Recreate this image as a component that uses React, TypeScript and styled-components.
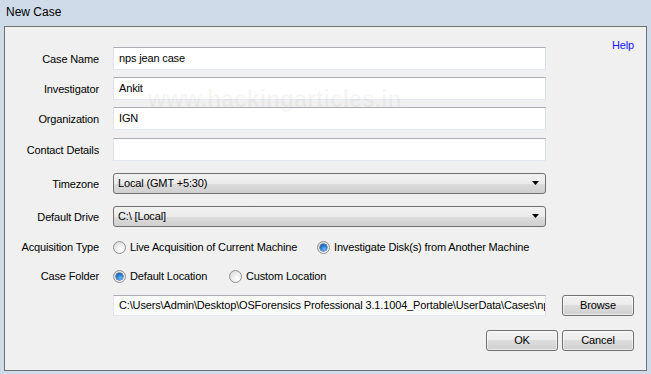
import React from "react";
import styled, { createGlobalStyle } from "styled-components";

const Global = createGlobalStyle`
  html, body { margin: 0; padding: 0; background: #cfdbe9; }
  * { box-sizing: border-box; }
`;

const UI_FONT = `"Liberation Sans", Arial, sans-serif`;

const Window = styled.div`
  width: 651px;
  height: 374px;
  display: flex;
  flex-direction: column;
  background: #cfdbe9;
  font-family: ${UI_FONT};
  font-size: 11px;
  letter-spacing: -0.15px;
  color: #000;
  overflow: hidden;
`;

const TitleBar = styled.div`
  height: 26px;
  display: flex;
  align-items: center;
  padding: 0 0 3px 6px;
  font-size: 12px;
  letter-spacing: 0;
  color: #000;
`;

const Panel = styled.div`
  position: relative;
  flex: 1;
  margin: 0 4px 3px 4px;
  border: 1px solid #6f7173;
  background: #f0f0f0;
  padding: 20px 12px 0 0;
  display: flex;
  flex-direction: column;
`;

const Row = styled.div<{ $mt?: number; $h: number }>`
  display: flex;
  align-items: center;
  height: ${(p) => p.$h}px;
  margin-top: ${(p) => p.$mt ?? 0}px;
`;

const Label = styled.div`
  width: 94px;
  flex: none;
  text-align: right;
  white-space: nowrap;
`;

const Control = styled.div`
  width: 433px;
  height: 100%;
  margin-left: 14px;
  flex: none;
  display: flex;
  align-items: center;
`;

const Aside = styled.div<{ $top?: boolean }>`
  width: 72px;
  margin-left: 16px;
  flex: none;
  display: flex;
  justify-content: flex-end;
  align-self: ${(p) => (p.$top ? "flex-start" : "center")};
  margin-top: ${(p) => (p.$top ? "-8px" : "0")};
`;

const TextBox = styled.input<{ $readonly?: boolean }>`
  width: 100%;
  height: 100%;
  margin: 0;
  border: 1px solid #e3e9ef;
  border-top-color: #abadb3;
  border-left-color: #e2e3ea;
  border-right-color: #dbdfe6;
  background: ${(p) => (p.$readonly ? "#fbfbfb" : "#ffffff")};
  padding: 0 0 1px 5px;
  font-family: ${UI_FONT};
  font-size: 11px;
  letter-spacing: -0.15px;
  color: #000;
  outline: none;
`;

const Combo = styled.div`
  width: 100%;
  height: 100%;
  border: 1px solid #707070;
  border-radius: 3px;
  background: linear-gradient(#f2f2f2 0%, #ebebeb 50%, #dddddd 50%, #cfcfcf 100%);
  display: flex;
  align-items: center;
  padding: 0 6px 1px 4px;
`;

const ComboText = styled.span`
  flex: 1;
  white-space: nowrap;
`;

const RadioGroup = styled.div`
  display: flex;
  align-items: center;
`;

const RadioItem = styled.label<{ $w?: number }>`
  display: flex;
  align-items: center;
  gap: 4px;
  width: ${(p) => (p.$w ? `${p.$w}px` : "auto")};
  white-space: nowrap;
`;

const RadioCircle = styled.span<{ $checked?: boolean }>`
  position: relative;
  width: 13px;
  height: 13px;
  flex: none;
  border-radius: 50%;
  border: 1px solid #8e8f8f;
  background: radial-gradient(circle at 65% 70%, #ffffff 0%, #f0f0f0 40%, #d4d4d4 100%);
  &::after {
    content: "";
    display: ${(p) => (p.$checked ? "block" : "none")};
    position: absolute;
    left: 2px;
    top: 2px;
    width: 7px;
    height: 7px;
    border-radius: 50%;
    background: radial-gradient(circle at 60% 70%, #6fbaf5 0%, #2a7fd0 45%, #0d3f7e 100%);
    box-shadow: 0 0 0 0.5px #1c4f8a;
  }
`;

const Button = styled.button<{ $w?: number }>`
  width: ${(p) => p.$w ?? 72}px;
  height: 21px;
  margin: 0;
  padding: 0 0 1px 0;
  border: 1px solid #707070;
  border-radius: 3px;
  background: linear-gradient(#f2f2f2 0%, #ebebeb 50%, #dddddd 50%, #cfcfcf 100%);
  box-shadow: inset 0 0 0 1px rgba(255, 255, 255, 0.6);
  font-family: ${UI_FONT};
  font-size: 11px;
  letter-spacing: -0.15px;
  color: #000;
`;

const ButtonBar = styled.div`
  display: flex;
  justify-content: flex-end;
  gap: 4px;
  margin-top: 14px;
`;

const HelpLink = styled.a`
  color: #1515f5;
  text-decoration: none;
  line-height: 13px;
  cursor: pointer;
`;

const Watermark = styled.div`
  position: absolute;
  left: 143px;
  top: 59px;
  font-family: "Liberation Sans", Arial, sans-serif;
  font-weight: bold;
  font-size: 23px;
  letter-spacing: 0;
  color: rgba(110, 110, 110, 0.06);
  pointer-events: none;
  white-space: nowrap;
`;

function Arrow() {
  return (
    <svg width="7" height="4" viewBox="0 0 7 4">
      <path d="M0 0 H7 L3.5 4 Z" fill="#000" />
    </svg>
  );
}

function Radio({ checked, label, w }: { checked?: boolean; label: string; w?: number }) {
  return (
    <RadioItem $w={w}>
      <RadioCircle $checked={checked} />
      <span>{label}</span>
    </RadioItem>
  );
}

export default function App() {
  return (
    <>
      <Global />
      <Window>
        <TitleBar>New Case</TitleBar>
        <Panel>
          <Row $h={23}>
            <Label>Case Name</Label>
            <Control>
              <TextBox defaultValue="nps jean case" />
            </Control>
            <Aside $top>
              <HelpLink>Help</HelpLink>
            </Aside>
          </Row>
          <Row $h={23} $mt={7}>
            <Label>Investigator</Label>
            <Control>
              <TextBox defaultValue="Ankit" />
            </Control>
          </Row>
          <Row $h={23} $mt={7}>
            <Label>Organization</Label>
            <Control>
              <TextBox defaultValue="IGN" />
            </Control>
          </Row>
          <Row $h={23} $mt={8}>
            <Label>Contact Details</Label>
            <Control>
              <TextBox defaultValue="" />
            </Control>
          </Row>
          <Row $h={21} $mt={12}>
            <Label>Timezone</Label>
            <Control>
              <Combo>
                <ComboText>Local (GMT +5:30)</ComboText>
                <Arrow />
              </Combo>
            </Control>
          </Row>
          <Row $h={21} $mt={12}>
            <Label>Default Drive</Label>
            <Control>
              <Combo>
                <ComboText>C:\ [Local]</ComboText>
                <Arrow />
              </Combo>
            </Control>
          </Row>
          <Row $h={16} $mt={12}>
            <Label>Acquisition Type</Label>
            <Control>
              <RadioGroup>
                <Radio label="Live Acquisition of Current Machine" w={204} />
                <Radio checked label="Investigate Disk(s) from Another Machine" />
              </RadioGroup>
            </Control>
          </Row>
          <Row $h={16} $mt={13}>
            <Label>Case Folder</Label>
            <Control>
              <RadioGroup>
                <Radio checked label="Default Location" w={116} />
                <Radio label="Custom Location" />
              </RadioGroup>
            </Control>
          </Row>
          <Row $h={21} $mt={11}>
            <Label />
            <Control>
              <TextBox
                $readonly
                readOnly
                defaultValue="C:\Users\Admin\Desktop\OSForensics Professional 3.1.1004_Portable\UserData\Cases\nps jean case"
              />
            </Control>
            <Aside>
              <Button>Browse</Button>
            </Aside>
          </Row>
          <ButtonBar>
            <Button>OK</Button>
            <Button>Cancel</Button>
          </ButtonBar>
          <Watermark>www.hackingarticles.in</Watermark>
        </Panel>
      </Window>
    </>
  );
}
